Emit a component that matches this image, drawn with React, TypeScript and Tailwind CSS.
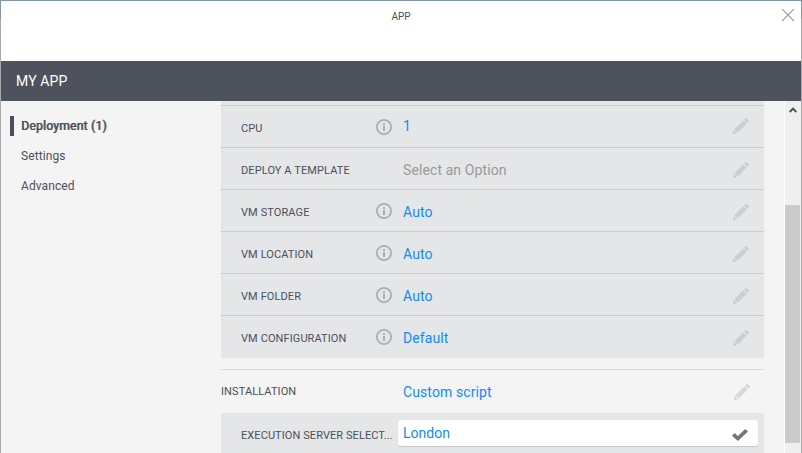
import React from 'react';

function InfoIcon() {
  return (
    <svg className="block h-4 w-4" viewBox="0 0 16 16" fill="none">
      <circle cx="8" cy="8" r="7.1" stroke="#a9adb5" strokeWidth="1.8" />
      <path d="M7 4h2v2H7zM7 7h2v5H7z" fill="#a9adb5" />
    </svg>
  );
}

function PencilIcon({ light = false }: { light?: boolean }) {
  return (
    <svg className="block h-4 w-4" viewBox="0 0 16 16" fill={light ? '#d3d3d3' : '#c7c9cb'}>
      <path d="M0 16 .8 12 4 15.2z" />
      <path d="M1.4 11.3 10.6 2.3l3.1 3.1-9 9z" />
      <path d="m11.3 1.5 1-1c.5-.5 1.1-.5 1.6 0l1.6 1.6c.4.5.4 1 0 1.5l-1 1z" />
      <path d="m2.6 12 8.8-8.6M4 13.3l8.7-8.7" stroke={light ? '#e5e5e5' : '#d9dbdd'} strokeWidth=".7" />
    </svg>
  );
}

type RowProps = {
  label: string;
  value: string;
  info?: boolean;
  muted?: boolean;
  raised?: boolean;
  last?: boolean;
};

function Row({ label, value, info = true, muted, raised, last }: RowProps) {
  const valuePad = raised ? 'pb-px' : last ? 'pt-px' : 'pt-[3px]';
  return (
    <div className={`flex shrink-0 items-center pl-5 pr-[15px] ${last ? 'h-[42px]' : 'h-[42px] border-b border-[#cbcdd1]'}`}>
      <div className={`w-[135px] whitespace-nowrap text-[11px] leading-4 tracking-[0.1px] text-[#4b4f5b] ${last ? 'pt-[3px]' : 'pt-[5px]'}`}>{label}</div>
      <div className={`w-[27px] ${last ? '' : 'pt-px'}`}>{info && <InfoIcon />}</div>
      <div className={`flex-1 text-sm leading-5 tracking-[0.1px] ${muted ? 'text-[#999]' : 'text-[#108aff]'} ${valuePad}`}>{value}</div>
      <div className={valuePad}><PencilIcon /></div>
    </div>
  );
}

export default function App() {
  return (
    <div className="h-[453px] w-[802px] overflow-hidden bg-[linear-gradient(#8296ab_19px,#a9a9a9_19px)] px-px pt-px font-[Roboto,sans-serif]">
      <div className="flex h-full flex-col bg-white">
        <header className="flex h-[60px] shrink-0 items-start pl-[30px] pr-[6px]">
          <div className="flex-1 pt-2 text-center text-[10px] leading-4 text-[#4b4f5b]"><span className="ml-[-10px]">APP</span></div>
          <svg className="mt-[7px] h-[14px] w-[14px]" viewBox="0 0 14 14" fill="none" stroke="#9da3aa" strokeWidth="1.1">
            <path d="m1 1 12 12M13 1 1 13" />
          </svg>
        </header>
        <div className="flex h-10 shrink-0 items-center bg-[#4e525d] pl-[15px] text-sm tracking-[0.1px] text-white">MY APP</div>
        <main className="flex min-h-0 flex-1 bg-[#f4f4f4]">
          <nav className="w-[220px] shrink-0 pl-[9px] pt-[15px] text-xs leading-5 tracking-[0.1px] text-[#4b4f5b]">
            <div className="mb-[10px] border-l-4 border-[#4b4f5b] pl-[7px] tracking-[0.28px] [text-shadow:0.7px_0_0_#4b4f5b]">Deployment (1)</div>
            <div className="mb-[10px] pl-[11px]">Settings</div>
            <div className="pl-[11px]">Advanced</div>
          </nav>
          <section className="w-[543px] shrink-0 overflow-hidden">
            <div className="h-[257px] bg-[#e5e6e8]">
              <div className="h-[5px] border-b border-[#cbcdd1]" />
              <Row label="CPU" value="1" raised />
              <Row label="DEPLOY A TEMPLATE" value="Select an Option" info={false} muted />
              <Row label="VM STORAGE" value="Auto" />
              <Row label="VM LOCATION" value="Auto" />
              <Row label="VM FOLDER" value="Auto" />
              <Row label="VM CONFIGURATION" value="Default" last />
            </div>
            <div className="mt-[11px] flex h-11 items-center border-t border-[#dadada] pr-[14px]">
              <div className="w-[182px] text-[11px] leading-4 tracking-[0.1px] text-[#4b4f5b]">INSTALLATION</div>
              <div className="flex-1 pt-px text-sm leading-5 tracking-[0.1px] text-[#108aff]">Custom script</div>
              <PencilIcon light />
            </div>
            <div className="flex h-[42px] items-start bg-[#e5e6e8] pl-5 pr-[6px] pt-[7px]">
              <div className="w-[157px] whitespace-nowrap pt-2 text-[11px] leading-4 tracking-[0.08px] text-[#4b4f5b]">EXECUTION SERVER SELECT...</div>
              <div className="flex h-[26px] flex-1 items-center justify-between rounded-[3px] bg-white pl-[5px] pr-[10px] text-sm text-[#108aff] shadow-[0_1px_1px_#c5c6c8]">
                <span>London</span>
                <svg className="mt-[3px] h-3 w-4" viewBox="0 0 16 12" fill="#777">
                  <path d="m0 6.7 2.6-2.6 3.3 3L13.2 0 16 2.6 5.9 12z" />
                </svg>
              </div>
            </div>
          </section>
          <div className="flex-1" />
          <div className="flex w-[17px] shrink-0 flex-col border-l border-white bg-[#efefef] pr-px">
            <div className="flex h-[104px] justify-center pt-[6px]">
              <svg className="h-[6px] w-2" viewBox="0 0 8 6" fill="none" stroke="#505050" strokeWidth="2">
                <path d="m.7 5 3.3-3.4L7.3 5" />
              </svg>
            </div>
            <div className="h-[238px] bg-[#cbcbcb]" />
          </div>
        </main>
      </div>
    </div>
  );
}
